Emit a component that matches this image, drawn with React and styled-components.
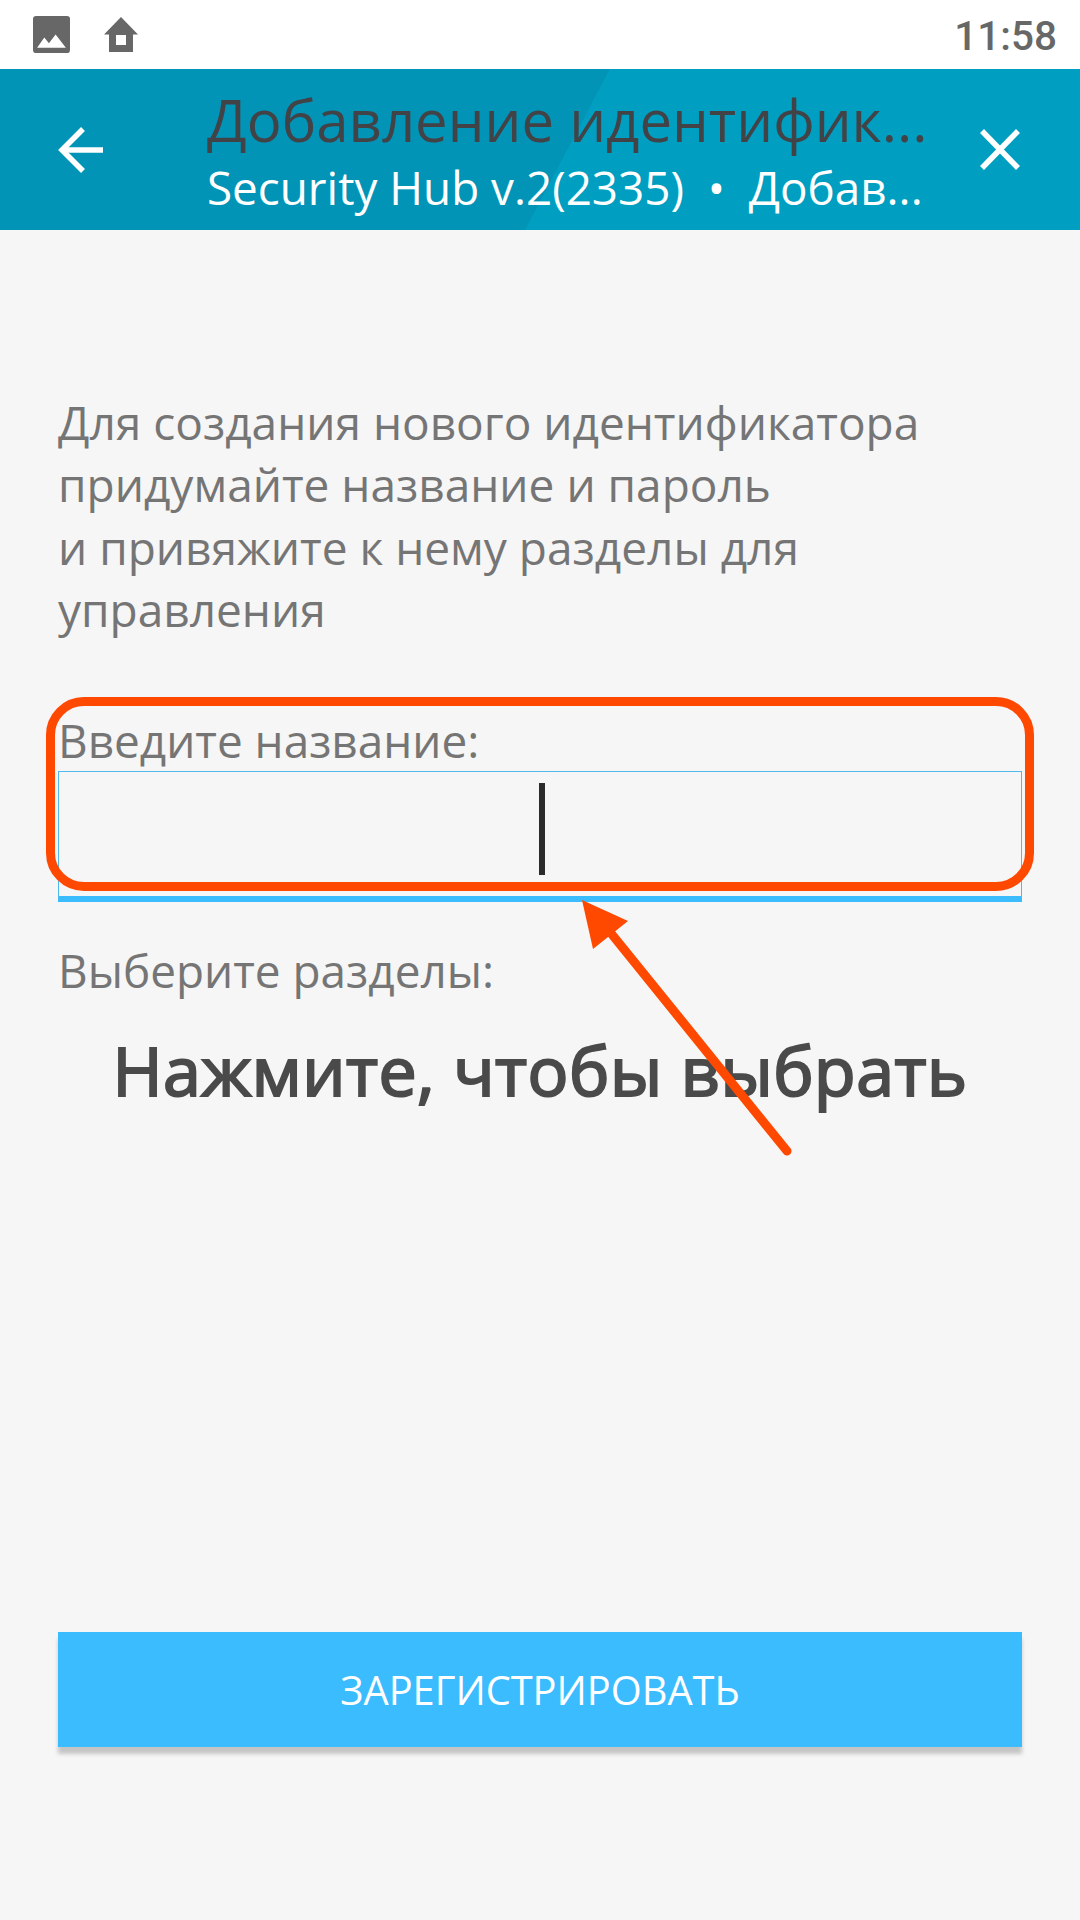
import React from 'react';
import styled, { createGlobalStyle } from 'styled-components';

const GlobalStyle = createGlobalStyle`
  html, body {
    margin: 0;
    padding: 0;
    background: #f6f6f6;
  }
  * {
    box-sizing: border-box;
  }
`;

const Page = styled.div`
  position: relative;
  display: flex;
  flex-direction: column;
  width: 1080px;
  height: 1920px;
  overflow: hidden;
  background: #f6f6f6;
  font-family: "Open Sans", "Noto Sans", sans-serif;
`;

const StatusBar = styled.div`
  display: flex;
  align-items: center;
  height: 69px;
  padding: 0 23px 0 33px;
  background: #fff;
`;

const StatusIcons = styled.div`
  display: flex;
  align-items: center;
  gap: 34px;
  flex: 1;
`;

const Clock = styled.span`
  font-family: Roboto, sans-serif;
  font-weight: 500;
  font-size: 40.5px;
  color: #676767;
  padding-top: 3px;
`;

const Header = styled.header`
  position: relative;
  display: flex;
  align-items: center;
  height: 161px;
  background: #009fc1;

  &::before {
    content: "";
    position: absolute;
    inset: 0;
    background: linear-gradient(90deg, #0294b7 70%, #0192b4 100%);
    clip-path: polygon(0 0, 610px 0, 525px 100%, 0 100%);
  }
`;

const HeaderButton = styled.button`
  position: relative;
  display: flex;
  align-items: center;
  justify-content: center;
  flex: none;
  width: ${(p) => p.$width}px;
  height: 100%;
  padding: 0;
  border: none;
  background: none;
`;

const HeaderText = styled.div`
  position: relative;
  flex: 1;
  min-width: 0;
  padding: 6px 0 0 45px;
`;

const HeaderTitle = styled.div`
  font-size: 58.1px;
  line-height: 70px;
  color: #424347;
  white-space: nowrap;
`;

const HeaderSubtitle = styled.div`
  font-size: 45.8px;
  line-height: 65px;
  color: #fff;
  white-space: pre;
`;

const Content = styled.main`
  display: flex;
  flex-direction: column;
  flex: 1;
  padding: 161px 58px 0;
`;

const Intro = styled.p`
  margin: 0 0 71px;
  font-size: 46px;
  line-height: 62.4px;
  color: #757575;
`;

const FieldLabel = styled.div`
  font-size: 45.9px;
  line-height: 56px;
  color: #757575;
`;

const NameInput = styled.div`
  display: flex;
  align-items: center;
  justify-content: center;
  height: 131px;
  margin: 3px 0 40px;
  padding-bottom: 6px;
  border: 1px solid #50b9eb;
  border-bottom: 6px solid #3abcff;
`;

const Caret = styled.span`
  width: 6px;
  height: 92px;
  margin-bottom: 3px;
  margin-left: 4px;
  background: #2b2b2b;
`;

const Picker = styled.div`
  margin-top: 30px;
  font-size: 68px;
  line-height: 84px;
  letter-spacing: 0.5px;
  -webkit-text-stroke: 2.1px #4a4a4a;
  color: #4a4a4a;
  text-align: center;
`;

const SubmitButton = styled.button`
  width: 100%;
  height: 115px;
  margin-top: auto;
  margin-bottom: 173px;
  border: none;
  background: #3abcff;
  box-shadow: 0 7px 4px rgba(0, 0, 0, 0.2);
  font-family: inherit;
  font-size: 39.8px;
  color: #fff;
`;

const Highlight = styled.div`
  position: absolute;
  left: 46px;
  top: 697px;
  width: 988px;
  height: 194px;
  border: 9px solid #ff4800;
  border-radius: 38px;
`;

const ArrowOverlay = styled.svg`
  position: absolute;
  left: 0;
  top: 0;
  pointer-events: none;
`;

const ImageIcon = () => (
  <svg width="37" height="37" viewBox="0 0 36 36">
    <rect x="0" y="0" width="36" height="36" rx="3" fill="#676767" />
    <path d="M4 31 L11 21 L15.5 26.5 L22 18 L32 31 Z" fill="#fff" />
  </svg>
);

const HomeIcon = () => (
  <svg width="34" height="36" viewBox="0 0 34 36">
    <path d="M17 0 L34 17.5 L29 17.5 L29 35 L5 35 L5 17.5 L0 17.5 Z" fill="#676767" />
    <rect x="12" y="18" width="10" height="10" fill="#fff" />
  </svg>
);

const BackIcon = () => (
  <svg width="46" height="46" viewBox="0 0 46 46" fill="none" stroke="#fff" strokeWidth="5.5">
    <path d="M45 23 H4" />
    <path d="M25 2 L4 23 L25 44" />
  </svg>
);

const CloseIcon = () => (
  <svg width="40" height="41" viewBox="0 0 40 41" fill="none" stroke="#fff" strokeWidth="5.5">
    <path d="M2 2 L38 39" />
    <path d="M38 2 L2 39" />
  </svg>
);

const App = () => {
  return (
    <Page>
      <GlobalStyle />
      <StatusBar>
        <StatusIcons>
          <ImageIcon />
          <HomeIcon />
        </StatusIcons>
        <Clock>11:58</Clock>
      </StatusBar>

      <Header>
        <HeaderButton $width={162}>
          <BackIcon />
        </HeaderButton>
        <HeaderText>
          <HeaderTitle>Добавление идентифик...</HeaderTitle>
          <HeaderSubtitle>Security Hub v.2(2335)  •  Добав...</HeaderSubtitle>
        </HeaderText>
        <HeaderButton $width={160}>
          <CloseIcon />
        </HeaderButton>
      </Header>

      <Content>
        <Intro>
          Для создания нового идентификатора
          <br />
          придумайте название и пароль
          <br />
          и привяжите к нему разделы для
          <br />
          управления
        </Intro>
        <FieldLabel>Введите название:</FieldLabel>
        <NameInput>
          <Caret />
        </NameInput>
        <FieldLabel>Выберите разделы:</FieldLabel>
        <Picker>Нажмите, чтобы выбрать</Picker>
        <SubmitButton>ЗАРЕГИСТРИРОВАТЬ</SubmitButton>
      </Content>

      <Highlight />
      <ArrowOverlay width="1080" height="1920" viewBox="0 0 1080 1920">
        <path d="M582 900 L628 921 L593 949 Z" fill="#ff4800" />
        <path d="M610 932 L787 1151" stroke="#ff4800" strokeWidth="9" strokeLinecap="round" />
      </ArrowOverlay>
    </Page>
  );
};

export default App;
